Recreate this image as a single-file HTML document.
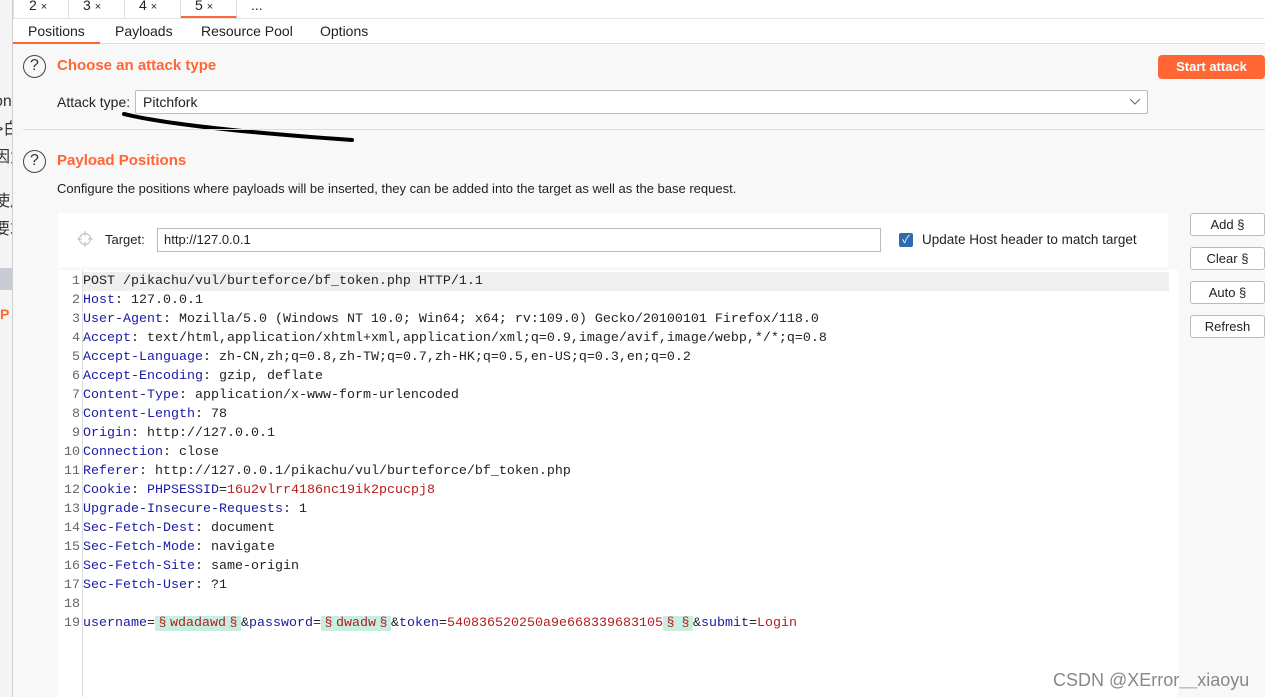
<!DOCTYPE html>
<html><head><meta charset="utf-8"><style>
*{margin:0;padding:0;box-sizing:border-box}
body{width:1265px;height:697px;overflow:hidden;position:relative;background:#f8f8f8;font-family:"Liberation Sans","Noto Sans CJK SC",sans-serif;font-size:13px;color:#222}
.abs{position:absolute}
.left{left:0;top:0;width:13px;height:697px;background:#f4f4f4;border-right:1px solid #cfcfcf;overflow:hidden;color:#333;font-size:16px;line-height:24px;white-space:nowrap}
.tabs{left:13px;top:0;width:1252px;height:18px;background:#fff}
.tab{position:absolute;top:-2px;height:20px;font-size:14px;line-height:14px;border-right:1px solid #ddd}
.tab small{font-size:11px}
.sub{left:13px;top:18px;width:1252px;height:26px;background:#fff;border-bottom:1px solid #ddd;border-top:1px solid #e4e4e4}
.sub span{position:absolute;top:4px;font-size:14px}
.q{width:23px;height:23px;border:1.5px solid #444;border-radius:50%;text-align:center;font-size:16px;line-height:20px;color:#333}
.h{color:#ff6633;font-weight:bold;font-size:15px}
.btn{left:1190px;width:75px;height:23px;border:1px solid #bbb;border-radius:3px;background:#fff;text-align:center;line-height:21px;font-size:13px}
.ed{left:58px;top:270px;width:1120px;height:427px;background:#fff}
.ln{position:absolute;left:0;width:22px;text-align:right;color:#666}
.tx{position:absolute;left:25px;white-space:pre}
.k{color:#1a1aa6}.r{color:#b71c1c}
.m{background:#c8eee2;color:#b71c1c}
.s{display:inline-block;width:15px;text-align:center}
</style></head><body>
<div class="abs left">
<div style="position:absolute;top:90px;left:-6px">on</div>
<div style="position:absolute;top:118px;left:-6px">&gt;白</div>
<div style="position:absolute;top:146px;left:-6px">因为</div>
<div style="position:absolute;top:190px;left:-6px">使用</div>
<div style="position:absolute;top:218px;left:-6px">要求</div>
<div style="position:absolute;top:268px;left:0;width:13px;height:22px;background:#c8ccd4"></div>
<div style="position:absolute;top:302px;left:0;color:#f63;font-weight:bold;font-size:14px">P</div>
</div>
<div class="abs tabs">
<div class="tab" style="left:0;width:56px;padding-left:15px;border-left:1px solid #ddd">2 <small>×</small></div>
<div class="tab" style="left:56px;width:56px;padding-left:14px">3 <small>×</small></div>
<div class="tab" style="left:112px;width:56px;padding-left:14px">4 <small>×</small></div>
<div class="tab" style="left:168px;width:56px;padding-left:14px;border-bottom:2px solid #f63">5 <small>×</small></div>
<div class="tab" style="left:224px;width:42px;padding-left:14px;border-right:none">...</div>
</div>
<div class="abs sub">
<span style="left:15px">Positions</span><span style="left:102px">Payloads</span><span style="left:188px">Resource Pool</span><span style="left:307px">Options</span>
<div style="position:absolute;left:0;top:23px;width:87px;height:2px;background:#f63"></div>
</div>
<div class="abs q" style="left:23px;top:55px">?</div>
<div class="abs h" style="left:57px;top:57px">Choose an attack type</div>
<div class="abs" style="left:1158px;top:55px;width:107px;height:24px;background:#ff6633;border-radius:4px;color:#fff;font-weight:bold;text-align:center;line-height:24px;font-size:13px">Start attack</div>
<div class="abs" style="left:57px;top:94px;font-size:14px">Attack type:</div>
<div class="abs" style="left:135px;top:90px;width:1013px;height:24px;background:#fff;border:1px solid #bbb;border-radius:2px;padding-left:7px;line-height:22px;font-size:14px">Pitchfork<svg style="position:absolute;right:6px;top:7px" width="12" height="8"><path d="M1 1 L6 6 L11 1" stroke="#666" fill="none"/></svg></div>
<svg class="abs" style="left:120px;top:108px" width="240" height="40"><path d="M4 6 Q60 20 232 32" stroke="#000" stroke-width="4" fill="none" stroke-linecap="round"/></svg>
<div class="abs" style="left:23px;top:129px;width:1242px;height:1px;background:#ddd"></div>
<div class="abs q" style="left:23px;top:150px">?</div>
<div class="abs h" style="left:57px;top:152px">Payload Positions</div>
<div class="abs" style="left:57px;top:181px;font-size:13px">Configure the positions where payloads will be inserted, they can be added into the target as well as the base request.</div>
<div class="abs" style="left:58px;top:213px;width:1110px;height:54px;background:#fff"></div>
<svg class="abs" style="left:77px;top:231px" width="16" height="16"><circle cx="8" cy="8" r="5.5" stroke="#bbb" fill="none"/><path d="M8 0v5M8 11v5M0 8h5M11 8h5" stroke="#bbb"/></svg>
<div class="abs" style="left:105px;top:232px;font-size:13px">Target:</div>
<div class="abs" style="left:157px;top:228px;width:724px;height:24px;background:#fff;border:1px solid #bbb;padding-left:6px;line-height:22px;font-size:13px">http://127.0.0.1</div>
<div class="abs" style="left:899px;top:233px;width:14px;height:14px;background:#2c6cb0;border-radius:2px;color:#fff;font-size:11px;line-height:14px;text-align:center">✓</div>
<div class="abs" style="left:922px;top:232px;font-size:13.5px">Update Host header to match target</div>
<div class="abs btn" style="top:213px">Add §</div>
<div class="abs btn" style="top:247px">Clear §</div>
<div class="abs btn" style="top:281px">Auto §</div>
<div class="abs btn" style="top:315px">Refresh</div>
<div class="abs ed">
<div style="position:absolute;left:24px;top:0;width:1px;height:427px;background:#ddd"></div>
<div style="position:absolute;left:25px;top:2px;width:1086px;height:19px;background:#efefef"></div>
</div>
<div class="abs" style="left:1053px;top:666px;color:#888;font-size:18px">CSDN @XError＿xiaoyu</div>
<div class="abs" style="left:58px;top:272px;font-family:'Liberation Mono',monospace;font-size:13.33px;line-height:19px">
<div style="position:relative;height:19px"><span class="ln">1</span><span class="tx">POST /pikachu/vul/burteforce/bf_token.php HTTP/1.1</span></div>
<div style="position:relative;height:19px"><span class="ln">2</span><span class="tx"><span class="k">Host</span>: 127.0.0.1</span></div>
<div style="position:relative;height:19px"><span class="ln">3</span><span class="tx"><span class="k">User-Agent</span>: Mozilla/5.0 (Windows NT 10.0; Win64; x64; rv:109.0) Gecko/20100101 Firefox/118.0</span></div>
<div style="position:relative;height:19px"><span class="ln">4</span><span class="tx"><span class="k">Accept</span>: text/html,application/xhtml+xml,application/xml;q=0.9,image/avif,image/webp,*/*;q=0.8</span></div>
<div style="position:relative;height:19px"><span class="ln">5</span><span class="tx"><span class="k">Accept-Language</span>: zh-CN,zh;q=0.8,zh-TW;q=0.7,zh-HK;q=0.5,en-US;q=0.3,en;q=0.2</span></div>
<div style="position:relative;height:19px"><span class="ln">6</span><span class="tx"><span class="k">Accept-Encoding</span>: gzip, deflate</span></div>
<div style="position:relative;height:19px"><span class="ln">7</span><span class="tx"><span class="k">Content-Type</span>: application/x-www-form-urlencoded</span></div>
<div style="position:relative;height:19px"><span class="ln">8</span><span class="tx"><span class="k">Content-Length</span>: 78</span></div>
<div style="position:relative;height:19px"><span class="ln">9</span><span class="tx"><span class="k">Origin</span>: http://127.0.0.1</span></div>
<div style="position:relative;height:19px"><span class="ln">10</span><span class="tx"><span class="k">Connection</span>: close</span></div>
<div style="position:relative;height:19px"><span class="ln">11</span><span class="tx"><span class="k">Referer</span>: http://127.0.0.1/pikachu/vul/burteforce/bf_token.php</span></div>
<div style="position:relative;height:19px"><span class="ln">12</span><span class="tx"><span class="k">Cookie</span>: <span class="k">PHPSESSID</span>=<span class="r">16u2vlrr4186nc19ik2pcucpj8</span></span></div>
<div style="position:relative;height:19px"><span class="ln">13</span><span class="tx"><span class="k">Upgrade-Insecure-Requests</span>: 1</span></div>
<div style="position:relative;height:19px"><span class="ln">14</span><span class="tx"><span class="k">Sec-Fetch-Dest</span>: document</span></div>
<div style="position:relative;height:19px"><span class="ln">15</span><span class="tx"><span class="k">Sec-Fetch-Mode</span>: navigate</span></div>
<div style="position:relative;height:19px"><span class="ln">16</span><span class="tx"><span class="k">Sec-Fetch-Site</span>: same-origin</span></div>
<div style="position:relative;height:19px"><span class="ln">17</span><span class="tx"><span class="k">Sec-Fetch-User</span>: ?1</span></div>
<div style="position:relative;height:19px"><span class="ln">18</span><span class="tx"></span></div>
<div style="position:relative;height:19px"><span class="ln">19</span><span class="tx"><span class="k">username</span>=<span class="m"><span class="s">§</span>wdadawd<span class="s">§</span></span>&amp;<span class="k">password</span>=<span class="m"><span class="s">§</span>dwadw<span class="s">§</span></span>&amp;<span class="k">token</span>=<span class="r">540836520250a9e668339683105</span><span class="m"><span class="s">§</span><span class="s">§</span></span>&amp;<span class="k">submit</span>=<span class="r">Login</span></span></div>
</div>
</body></html>
